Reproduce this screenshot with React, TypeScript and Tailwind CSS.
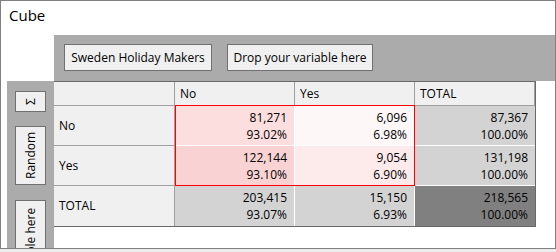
const font = { fontFamily: '"Open Sans", "Noto Sans", sans-serif' }

type Cell = { n: string; p: string; bg: string }

const rows: { label: string; cells: Cell[] }[] = [
  {
    label: 'No',
    cells: [
      { n: '81,271', p: '93.02%', bg: 'bg-[#fcdede]' },
      { n: '6,096', p: '6.98%', bg: 'bg-[#fef7f7]' },
      { n: '87,367', p: '100.00%', bg: 'bg-[#d3d3d3]' },
    ],
  },
  {
    label: 'Yes',
    cells: [
      { n: '122,144', p: '93.10%', bg: 'bg-[#f9d3d3]' },
      { n: '9,054', p: '6.90%', bg: 'bg-[#fdeaea]' },
      { n: '131,198', p: '100.00%', bg: 'bg-[#d3d3d3]' },
    ],
  },
  {
    label: 'TOTAL',
    cells: [
      { n: '203,415', p: '93.07%', bg: 'bg-[#d3d3d3]' },
      { n: '15,150', p: '6.93%', bg: 'bg-[#d3d3d3]' },
      { n: '218,565', p: '100.00%', bg: 'bg-[#808080]' },
    ],
  },
]

function VButton({ label, className }: { label: string; className: string }) {
  return (
    <div
      className={`w-[31px] shrink-0 rotate-180 border border-[#707070] bg-[#f0f0f0] text-[12px] leading-none text-black flex items-center justify-center [writing-mode:vertical-rl] ${className}`}
    >
      {label}
    </div>
  )
}

function PivotTable() {
  return (
    <div className="relative">
      <div className="grid grid-cols-[121px_120px_120px_120px] grid-rows-[24px_40px_40px_40px] border-t border-r border-b border-[#696969] text-[12px] text-black">
        <div className="border-r border-b border-[#a0a0a0] bg-[#f0f0f0]" />
        {['No', 'Yes', 'TOTAL'].map((h) => (
          <div key={h} className="flex items-center border-r border-b border-[#a0a0a0] bg-[#f0f0f0] pl-[5px] last:border-r-0">
            {h}
          </div>
        ))}
        {rows.map((r, ri) => (
          <div key={r.label} className="contents">
            <div className={`flex items-center border-r border-[#a0a0a0] bg-[#f0f0f0] pl-[5px] ${ri < 2 ? 'border-b' : ''}`}>
              {r.label}
            </div>
            {r.cells.map((c, ci) => (
              <div
                key={ci}
                className={`flex flex-col items-end justify-center pr-[7px] leading-[17px] border-white ${c.bg} ${ci < 2 ? 'border-r' : ''} ${ri < 2 ? 'border-b' : ''}`}
              >
                <span>{c.n}</span>
                <span>{c.p}</span>
              </div>
            ))}
          </div>
        ))}
      </div>
      <div className="pointer-events-none absolute left-[121px] top-[24px] h-[81px] w-[240px] border border-[#ff0000]" />
    </div>
  )
}

export default function App() {
  return (
    <div className="h-[252px] w-[556px] bg-[#ececec]" style={font}>
      <div className="flex h-[249px] flex-col overflow-hidden border border-[#7f7f7f] bg-white">
        <div className="h-[34px] shrink-0 pl-[8px] pt-[3px] text-[15px] text-black">Cube</div>
        <div className="ml-[53px] flex h-[46px] shrink-0 items-start gap-[15px] bg-[#ababab] pl-[10px] pt-[9px]">
          <div className="flex h-[27px] w-[148px] items-center justify-center border border-[#707070] bg-[#f0f0f0] text-[12px] text-black">
            Sweden Holiday Makers
          </div>
          <div className="flex h-[27px] w-[146px] items-center justify-center border border-[#707070] bg-[#f0f0f0] text-[12px] text-black">
            Drop your variable here
          </div>
        </div>
        <div className="flex flex-1 items-start">
          <div className="ml-[6px] flex h-full w-[47px] shrink-0 flex-col gap-[14px] bg-[#ababab] pl-[8px] pt-[10px]">
            <VButton label="Σ" className="h-[21px]" />
            <VButton label="Random" className="h-[59px]" />
            <VButton label="Drop your variable here" className="mt-[1px] h-[148px] shrink-0" />
          </div>
          <PivotTable />
        </div>
      </div>
    </div>
  )
}
